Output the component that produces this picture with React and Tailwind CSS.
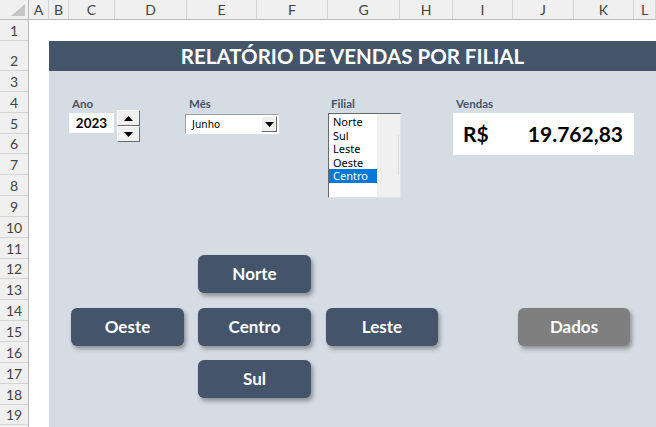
import React from 'react';

const cols = [
  ['A', 20], ['B', 20], ['C', 46], ['D', 72], ['E', 70], ['F', 71],
  ['G', 72], ['H', 53], ['I', 60], ['J', 61], ['K', 60], ['L', 22],
];

const rows = [
  [1, 'h-[21px]'], [2, 'h-[30px]'],
  ...Array.from({ length: 17 }, (_, i) => [i + 3, 'h-[20.85px]']),
];

const calibri = { fontFamily: 'Lato, "Open Sans", sans-serif' };

const Btn = ({ children, gray, className = '' }) => (
  <div
    className={`h-[38px] rounded-[6px] flex items-center justify-center text-white font-bold text-[17px] shadow-[2px_3px_4px_rgba(0,0,0,0.35)] ${
      gray ? 'bg-[#7f7f7f]' : 'bg-[#44546a]'
    } ${className}`}
  >
    {children}
  </div>
);

const Triangle = ({ down }) => (
  <svg width="9" height="5" viewBox="0 0 9 5">
    <polygon points={down ? '0,0 9,0 4.5,5' : '4.5,0 9,5 0,5'} fill="#000" />
  </svg>
);

export default function App() {
  return (
    <div className="w-[656px] h-[427px] overflow-hidden flex flex-col bg-white" style={calibri}>
      {/* Column headers */}
      <div className="flex h-[20px] shrink-0 bg-[#f0f0f0] border-b border-[#b9b9b9]">
        <div className="w-[29px] shrink-0 border-r border-[#b9b9b9] relative">
          <svg className="absolute right-[3px] bottom-[3px]" width="14" height="12" viewBox="0 0 14 12">
            <polygon points="14,0 14,12 0,12" fill="#c4c4c4" />
          </svg>
        </div>
        {cols.map(([c, w]) => (
          <div
            key={c}
            style={{ width: w }}
            className="shrink-0 border-r border-[#d4d4d4] flex items-center justify-center text-[14px] text-[#444]"
          >
            {c}
          </div>
        ))}
      </div>

      <div className="flex flex-1 min-h-0">
        {/* Row headers */}
        <div className="w-[29px] shrink-0 bg-[#f0f0f0] border-r border-[#b9b9b9] flex flex-col">
          {rows.map(([n, h]) => (
            <div
              key={n}
              className={`${h} shrink-0 border-b border-[#d4d4d4] flex items-end justify-center text-[14px] leading-[18px] text-[#444]`}
            >
              {n}
            </div>
          ))}
        </div>

        {/* Sheet */}
        <div className="flex-1 flex flex-col">
          <div className="h-[21px] shrink-0" />
          <div className="flex-1 ml-[20px] bg-[#d6dce4] flex flex-col">
            <div className="h-[30px] shrink-0 bg-[#44546a] flex items-center justify-center pt-[1px] text-white font-bold text-[20.5px]">
              RELATÓRIO DE VENDAS POR FILIAL
            </div>

            {/* Controls */}
            <div className="flex items-start pt-[26px] pl-[20px] text-[#44546a]">
              <div className="w-[116px] shrink-0">
                <div className="h-[14px] leading-[14px] text-[11.5px] font-bold pl-[3px]">Ano</div>
                <div className="flex items-start">
                  <div className="mt-[2px] w-[45px] h-[20px] bg-white flex items-center justify-center text-black font-bold text-[13.5px]">
                    2023
                  </div>
                  <div className="ml-[3px] -mt-[1px] w-[23px] flex flex-col">
                    <div className="h-[16px] bg-[#f0f0f0] border border-t-white border-l-white border-r-[#696969] border-b-[#696969] flex items-center justify-center">
                      <Triangle />
                    </div>
                    <div className="h-[16px] bg-[#f0f0f0] border border-t-white border-l-white border-r-[#696969] border-b-[#696969] flex items-center justify-center">
                      <Triangle down />
                    </div>
                  </div>
                </div>
              </div>

              <div className="w-[143px] shrink-0">
                <div className="h-[14px] leading-[14px] text-[11.5px] font-bold pl-[4px]">Mês</div>
                <div className="mt-[3px] w-[94px] h-[20px] bg-white border border-t-[#a0a0a0] border-l-[#a0a0a0] border-r-white border-b-white flex items-center">
                  <div
                    className="flex-1 pl-[6px] text-[10px] text-black"
                    style={{ fontFamily: '"DejaVu Sans", sans-serif' }}
                  >
                    Junho
                  </div>
                  <div className="w-[16px] h-[16px] mr-[1px] bg-[#f0f0f0] border border-t-white border-l-white border-r-[#696969] border-b-[#696969] flex items-center justify-center">
                    <Triangle down />
                  </div>
                </div>
              </div>

              <div className="w-[125px] shrink-0">
                <div className="h-[14px] leading-[14px] text-[11.5px] font-bold pl-[3px]">Filial</div>
                <div className="mt-[2px] w-[73px] h-[85px] bg-white border border-t-[#696969] border-l-[#696969] border-r-[#e3e3e3] border-b-[#e3e3e3] flex">
                  <div
                    className="w-[48px] pt-[1px] flex flex-col text-[11px] text-black"
                    style={{ fontFamily: '"Noto Sans", "Open Sans", sans-serif' }}
                  >
                    {['Norte', 'Sul', 'Leste', 'Oeste'].map((f) => (
                      <div key={f} className="h-[13.5px] leading-[13.5px] pl-[4px]">
                        {f}
                      </div>
                    ))}
                    <div className="h-[14px] leading-[14px] pl-[4px] bg-[#0078d7] text-white">Centro</div>
                  </div>
                  <div className="flex-1 bg-[#f0f0f0] flex justify-end pt-[21px] pr-[1px]">
                    <div className="w-[1px] h-[40px] bg-[#dcdcdc]" />
                  </div>
                </div>
              </div>

              <div className="shrink-0">
                <div className="h-[14px] leading-[14px] text-[11.5px] font-bold pl-[3px]">Vendas</div>
                <div className="mt-[2px] w-[181px] h-[42px] bg-white flex items-center justify-between pl-[10px] pr-[11px] text-black font-bold text-[21px]">
                  <span>R$</span>
                  <span>19.762,83</span>
                </div>
              </div>
            </div>

            {/* Buttons */}
            <div className="mt-[57px] pl-[22px] flex flex-col">
              <div className="flex">
                <Btn className="ml-[127px] w-[113px]">Norte</Btn>
              </div>
              <div className="flex mt-[15px]">
                <Btn className="w-[113px]">Oeste</Btn>
                <Btn className="ml-[14px] w-[113px]">Centro</Btn>
                <Btn className="ml-[15px] w-[112px]">Leste</Btn>
                <Btn gray className="ml-[80px] w-[112px]">Dados</Btn>
              </div>
              <div className="flex mt-[14px]">
                <Btn className="ml-[127px] w-[113px]">Sul</Btn>
              </div>
            </div>
          </div>
        </div>
      </div>
    </div>
  );
}
